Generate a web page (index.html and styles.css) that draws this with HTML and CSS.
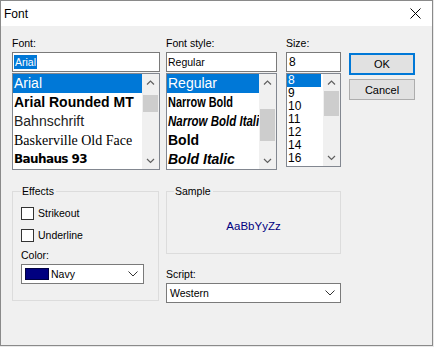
FILE: index.html
```html
<!DOCTYPE html>
<html lang="en">
<head>
    <meta charset="UTF-8">
    <title>Font</title>
    <link rel="stylesheet" href="styles.css">
</head>
<body>
    <div class="window">
        <div class="titlebar">
            <span class="title">Font</span>
            <svg class="close" width="11" height="11" viewBox="0 0 11 11">
                <path d="M0.5 0.5 L10.5 10.5 M10.5 0.5 L0.5 10.5" stroke="#000" stroke-width="1" fill="none"/>
            </svg>
        </div>

        <div class="client">
            <div class="top-row">
                <!-- font family -->
                <div class="field field-font">
                    <span class="label">Font:</span>
                    <div class="edit"><span class="picked">Arial</span></div>
                    <div class="list">
                        <div class="items">
                            <div class="item big sel">Arial</div>
                            <div class="item big rounded">Arial Rounded MT</div>
                            <div class="item big bahn">Bahnschrift</div>
                            <div class="item big bask">Baskerville Old Face</div>
                            <div class="item big bauhaus">Bauhaus 93</div>
                        </div>
                        <div class="scrollbar">
                            <svg class="arrow" width="9" height="17" viewBox="0 0 9 17"><polyline points="1,10.5 4.5,7 8,10.5" stroke="#606060" stroke-width="1.2" fill="none"/></svg>
                            <div class="track"><div class="thumb thumb-font"></div></div>
                            <svg class="arrow" width="9" height="17" viewBox="0 0 9 17"><polyline points="1,7 4.5,10.5 8,7" stroke="#606060" stroke-width="1.2" fill="none"/></svg>
                        </div>
                    </div>
                </div>

                <!-- font style -->
                <div class="field field-style">
                    <span class="label">Font style:</span>
                    <div class="edit">Regular</div>
                    <div class="list">
                        <div class="items">
                            <div class="item big sel">Regular</div>
                            <div class="item big narrow"><span>Narrow Bold</span></div>
                            <div class="item big narrow italic"><span>Narrow Bold Italic</span></div>
                            <div class="item big bold">Bold</div>
                            <div class="item big bold italic">Bold Italic</div>
                        </div>
                        <div class="scrollbar">
                            <svg class="arrow" width="9" height="17" viewBox="0 0 9 17"><polyline points="1,10.5 4.5,7 8,10.5" stroke="#606060" stroke-width="1.2" fill="none"/></svg>
                            <div class="track"><div class="thumb thumb-style"></div></div>
                            <svg class="arrow" width="9" height="17" viewBox="0 0 9 17"><polyline points="1,7 4.5,10.5 8,7" stroke="#606060" stroke-width="1.2" fill="none"/></svg>
                        </div>
                    </div>
                </div>

                <!-- size -->
                <div class="field field-size">
                    <span class="label">Size:</span>
                    <div class="edit size-edit">8</div>
                    <div class="list size-list">
                        <div class="items">
                            <div class="item small sel">8</div>
                            <div class="item small">9</div>
                            <div class="item small">10</div>
                            <div class="item small">11</div>
                            <div class="item small">12</div>
                            <div class="item small">14</div>
                            <div class="item small">16</div>
                        </div>
                        <div class="scrollbar">
                            <svg class="arrow" width="9" height="17" viewBox="0 0 9 17"><polyline points="1,10.5 4.5,7 8,10.5" stroke="#606060" stroke-width="1.2" fill="none"/></svg>
                            <div class="track"><div class="thumb thumb-size"></div></div>
                            <svg class="arrow" width="9" height="17" viewBox="0 0 9 17"><polyline points="1,7 4.5,10.5 8,7" stroke="#606060" stroke-width="1.2" fill="none"/></svg>
                        </div>
                    </div>
                </div>

                <div class="buttons">
                    <button class="btn btn-default">OK</button>
                    <button class="btn">Cancel</button>
                </div>
            </div>

            <div class="bottom-row">
                <fieldset class="group effects">
                    <legend>Effects</legend>
                    <div class="check-row"><span class="checkbox"></span>Strikeout</div>
                    <div class="check-row"><span class="checkbox"></span>Underline</div>
                    <span class="label color-label">Color:</span>
                    <div class="combo color-combo">
                        <span class="swatch"></span>
                        <span class="combo-text">Navy</span>
                        <svg class="chevron" width="10" height="6" viewBox="0 0 10 6"><polyline points="0.5,0.5 5,5 9.5,0.5" stroke="#333" stroke-width="1" fill="none"/></svg>
                    </div>
                </fieldset>

                <div class="right-col">
                    <fieldset class="group sample">
                        <legend>Sample</legend>
                        <div class="sample-text">AaBbYyZz</div>
                    </fieldset>
                    <span class="label script-label">Script:</span>
                    <div class="combo script-combo">
                        <span class="combo-text">Western</span>
                        <svg class="chevron" width="10" height="6" viewBox="0 0 10 6"><polyline points="0.5,0.5 5,5 9.5,0.5" stroke="#333" stroke-width="1" fill="none"/></svg>
                    </div>
                </div>
            </div>
        </div>
    </div>
</body>
</html>
```

FILE: styles.css
```css
body {
    margin: 0;
    background-color: #e9e9e9;
    font-family: "Liberation Sans", Arial, sans-serif;
    font-size: 10.5px;
    color: #000;
}

.window {
    width: 433px;
    height: 346px;
    box-sizing: border-box;
    border: 1px solid #8a8a8a;
    background-color: #f0f0f0;
    display: flex;
    flex-direction: column;
}

.titlebar {
    flex: none;
    height: 25px;
    background-color: #fff;
    display: flex;
    align-items: center;
    justify-content: space-between;
    padding: 0 11px 0 3px;
}

.title {
    font-size: 12px;
}

.close {
    margin-top: -1px;
}

.client {
    padding: 10px 0 0 11px;
}

.top-row {
    display: flex;
    align-items: flex-start;
}

.label {
    display: block;
    height: 14px;
    line-height: 14px;
}

.field-font {
    width: 148px;
}

.field-style {
    width: 111px;
    margin-left: 6px;
}

.field-size {
    width: 55px;
    margin-left: 9px;
}

.edit {
    margin-top: 2px;
    height: 20px;
    box-sizing: border-box;
    border: 1px solid #7a7a7a;
    background-color: #fff;
    padding-left: 1px;
    line-height: 18px;
    white-space: nowrap;
}

.picked {
    display: inline-block;
    line-height: 14px;
    padding: 0 1px;
    background-color: #0078d7;
    color: #fff;
}

.size-edit {
    font-size: 12px;
    padding-left: 2px;
}

.list {
    margin-top: 1px;
    height: 97px;
    box-sizing: border-box;
    border: 1px solid #828790;
    background-color: #fff;
    display: flex;
}

.size-list {
    height: 94px;
}

.items {
    flex: 1;
    overflow: hidden;
}

.item {
    white-space: nowrap;
    padding-left: 1px;
}

.item.big {
    height: 19px;
    line-height: 19px;
    font-size: 14px;
}

.item.small {
    height: 13px;
    line-height: 13px;
    font-size: 12px;
    width: 33px;
}

.item.sel {
    background-color: #0078d7;
    color: #fff;
}

.rounded {
    font-weight: bold;
}

.bahn {
    color: #222;
}

.bask {
    font-family: "Liberation Serif", "Times New Roman", serif;
}

.bauhaus {
    font-family: "DejaVu Sans", sans-serif;
    font-weight: 900;
    font-size: 12px !important;
    letter-spacing: -0.6px;
}

.narrow {
    font-weight: bold;
}

/* no narrow face installed, squeeze the bold one */
.narrow span {
    display: inline-block;
    transform: scaleX(0.78);
    transform-origin: left center;
}

.narrow.italic span {
    transform: scaleX(0.82);
}

.bold {
    font-weight: bold;
}

.italic {
    font-style: italic;
}

.scrollbar {
    flex: none;
    width: 17px;
    background-color: #f0f0f0;
    display: flex;
    flex-direction: column;
    align-items: center;
}

.arrow {
    flex: none;
}

.track {
    flex: 1;
    width: 100%;
    padding: 0 1px;
    box-sizing: border-box;
}

.thumb {
    background-color: #cdcdcd;
}

.thumb-font {
    margin-top: 4px;
    height: 17px;
}

.thumb-style {
    margin-top: 18px;
    height: 32px;
}

.thumb-size {
    margin-top: 0;
    height: 25px;
}

.buttons {
    width: 66px;
    margin-left: 8px;
    padding-top: 17px;
    display: flex;
    flex-direction: column;
    gap: 4px;
}

.btn {
    height: 21px;
    box-sizing: border-box;
    border: 1px solid #adadad;
    background-color: #e1e1e1;
    font-family: inherit;
    font-size: 11px;
    color: #000;
    padding: 0;
}

.btn-default {
    height: 22px;
    border: 2px solid #0078d7;
}

.bottom-row {
    display: flex;
    align-items: flex-start;
    margin-top: 14px;
}

.group {
    margin: 0;
    border: 1px solid #dcdcdc;
    box-sizing: border-box;
    min-width: 0;
}

.group legend {
    padding: 0 2px 0 1px;
    line-height: 14px;
}

.effects {
    width: 147px;
    margin-left: 0;
    padding: 0 0 16px 8px;
}

.check-row {
    display: flex;
    align-items: center;
    height: 22px;
}

.check-row:first-of-type {
    margin-top: 4px;
}

.checkbox {
    width: 13px;
    height: 13px;
    box-sizing: border-box;
    border: 1px solid #333;
    background-color: #fff;
    margin-right: 4px;
}

.color-label {
    margin-top: 2px;
}

.combo {
    height: 20px;
    box-sizing: border-box;
    border: 1px solid #7a7a7a;
    background-color: #fff;
    display: flex;
    align-items: center;
    margin-top: 2px;
}

.color-combo {
    width: 123px;
    padding: 0 5px 0 3px;
}

.swatch {
    width: 24px;
    height: 12px;
    box-sizing: border-box;
    background-color: #000080;
    border: 1px solid #000040;
    margin-right: 2px;
}

.combo-text {
    flex: 1;
}

.chevron {
    flex: none;
}

.right-col {
    width: 175px;
    margin-left: 7px;
}

.sample {
    height: 70px;
    padding: 0 0 0 7px;
}

.sample-text {
    height: 54px;
    display: flex;
    align-items: center;
    justify-content: center;
    padding: 2px 7px 0 0;
    box-sizing: border-box;
    font-size: 11.5px;
    color: #000080;
}

.script-label {
    margin-top: 13px;
}

.script-combo {
    padding: 0 5px 0 3px;
}
```
